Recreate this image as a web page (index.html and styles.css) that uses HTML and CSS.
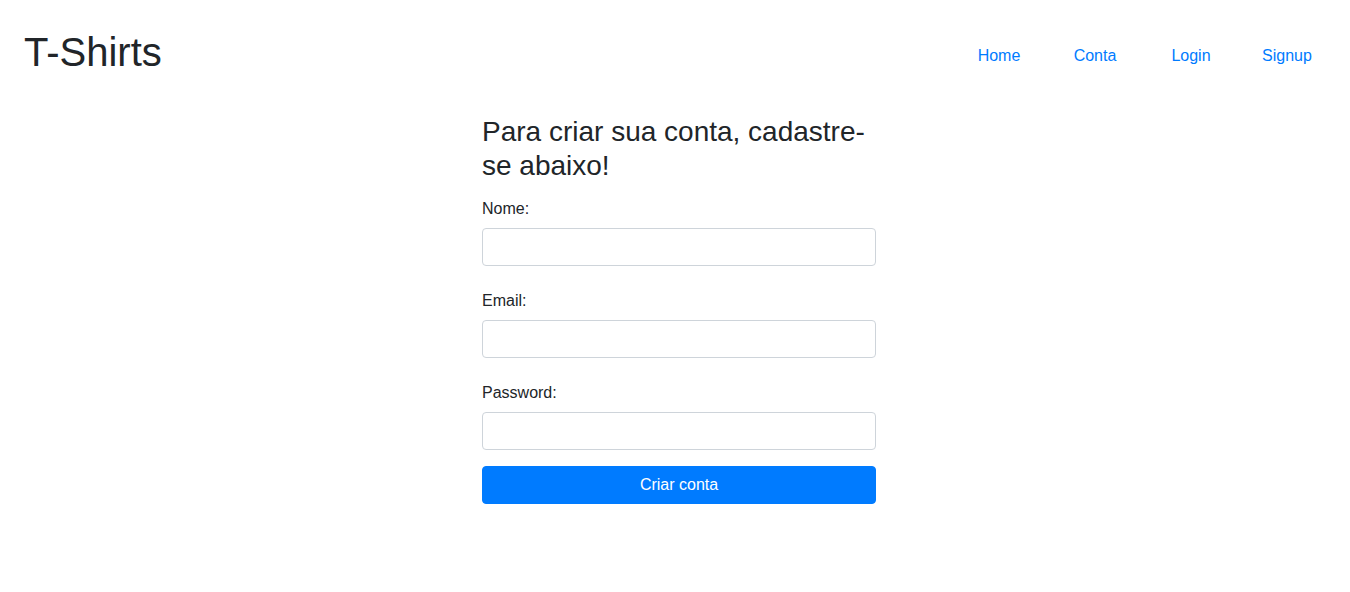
FILE: index.html
```html
<!DOCTYPE html>
<html lang="pt">
<head>
<meta charset="utf-8">
<title>T-Shirts</title>
<link rel="stylesheet" href="styles.css">
</head>
<body>
<header class="topbar">
  <a class="brand" href="#">T-Shirts</a>
  <nav class="nav">
    <a class="nav-link" href="#">Home</a>
    <a class="nav-link" href="#">Conta</a>
    <a class="nav-link" href="#">Login</a>
    <a class="nav-link" href="#">Signup</a>
  </nav>
</header>
<main class="main">
  <form class="signup">
    <h3 class="title">Para criar sua conta, cadastre-se abaixo!</h3>
    <div class="group">
      <label class="label" for="nome">Nome:</label>
      <input class="input" id="nome" type="text">
    </div>
    <div class="group">
      <label class="label" for="email">Email:</label>
      <input class="input" id="email" type="email">
    </div>
    <div class="group last">
      <label class="label" for="pw">Password:</label>
      <input class="input" id="pw" type="password">
    </div>
    <button class="btn" type="button">Criar conta</button>
  </form>
</main>
</body>
</html>
```
FILE: styles.css
```css
* { box-sizing: border-box; }
html, body { margin: 0; padding: 0; }
body {
  font-family: "Liberation Sans", Arial, sans-serif;
  font-size: 16px;
  line-height: 1.5;
  color: #212529;
  background: #fff;
}
.topbar {
  display: flex;
  align-items: center;
  justify-content: space-between;
  padding: 28px 15px 0 24px;
}
.brand {
  font-size: 40px;
  line-height: 48px;
  color: #212529;
  text-decoration: none;
}
.nav {
  display: flex;
  padding-top: 8px;
}
.nav-link {
  width: 96px;
  text-align: center;
  color: #007bff;
  text-decoration: none;
  line-height: 24px;
}
.main {
  display: flex;
  justify-content: center;
  padding-left: 8px;
  padding-top: 39px;
}
.signup {
  width: 394px;
}
.title {
  font-size: 28px;
  font-weight: 400;
  line-height: 33.6px;
  margin: 0 0 14px;
  color: #212529;
}
.group {
  margin-bottom: 22px;
}
.group.last {
  margin-bottom: 16px;
}
.label {
  display: block;
  padding-top: 1px;
  margin-bottom: 7px;
  line-height: 24px;
}
.input {
  display: block;
  width: 100%;
  height: 38px;
  padding: 6px 12px;
  font: inherit;
  color: #495057;
  background: #fff;
  border: 1px solid #ced4da;
  border-radius: 4px;
}
.btn {
  display: block;
  width: 100%;
  height: 38px;
  font: inherit;
  color: #fff;
  background: #007bff;
  border: 1px solid #007bff;
  border-radius: 4px;
  padding: 6px 12px;
  cursor: pointer;
}
```
